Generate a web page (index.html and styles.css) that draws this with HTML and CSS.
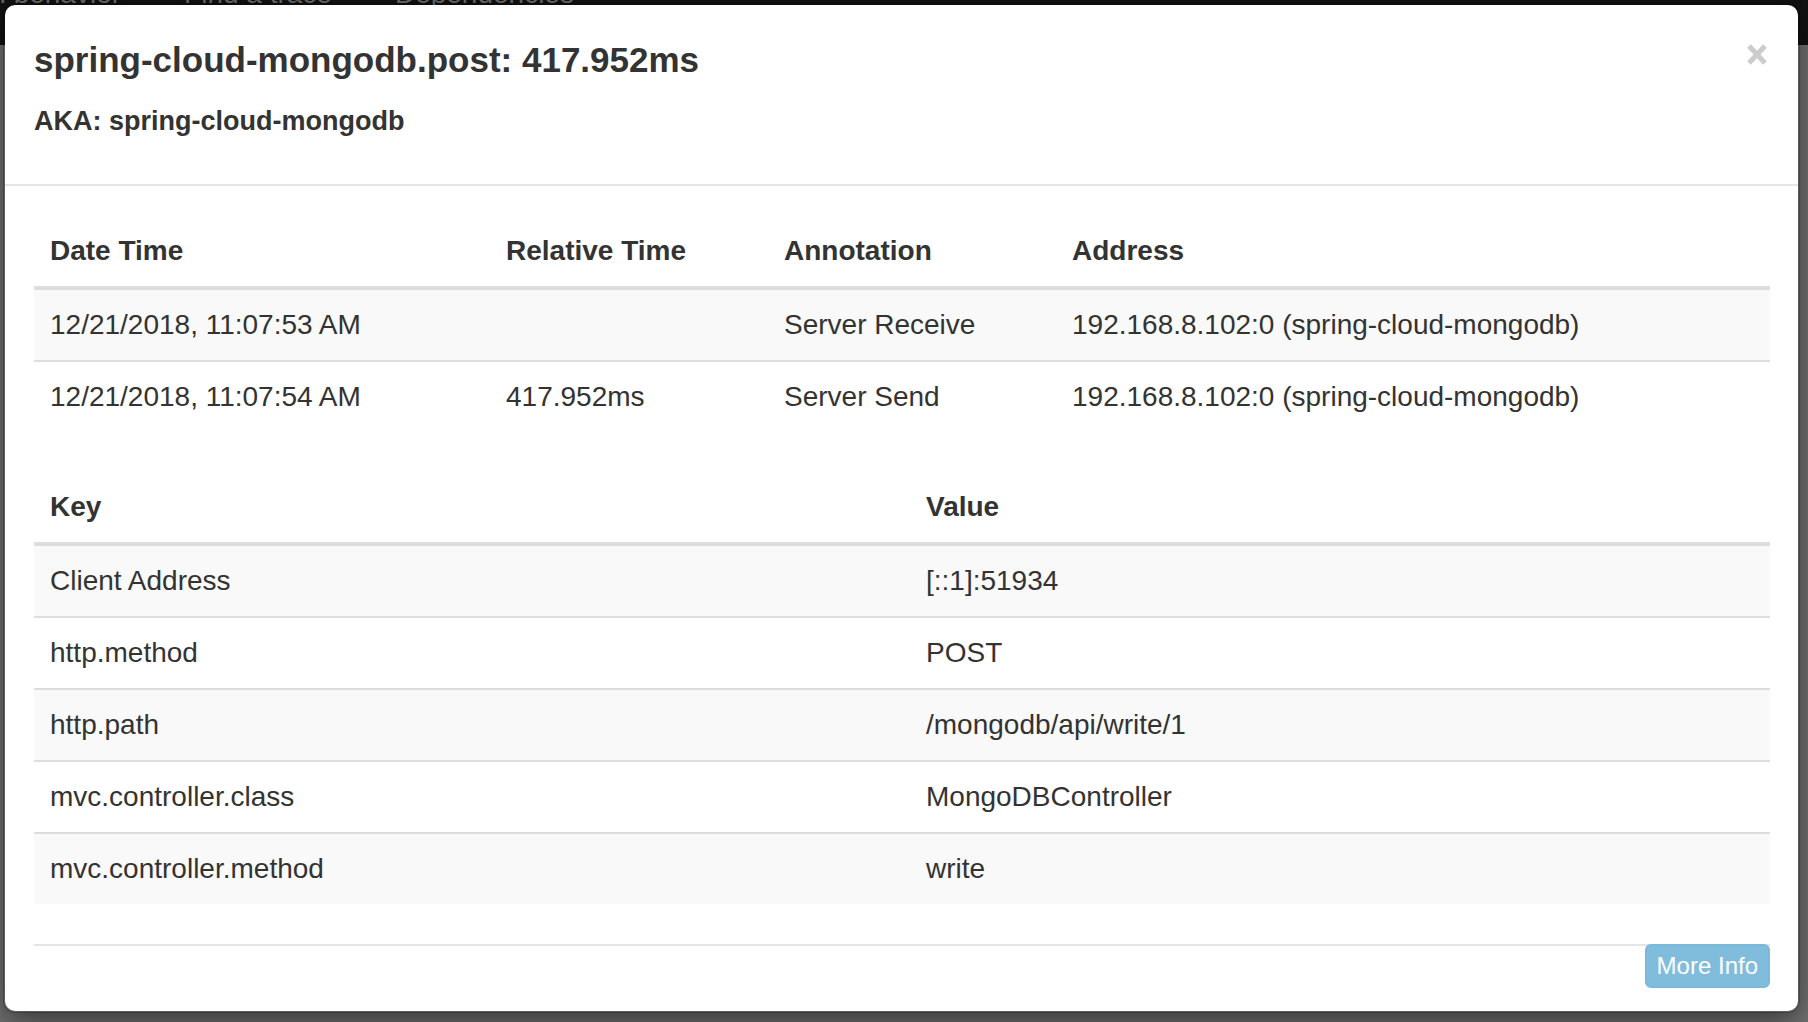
FILE: index.html
```html
<!DOCTYPE html>
<html>
<head>
<meta charset="utf-8">
<title>Span details</title>
<link rel="stylesheet" href="styles.css">
</head>
<body>
<div class="page">
  <div class="navbar">
    <div class="nav-links">
      <span class="nav-item">Investigate system behavior</span>
      <span class="nav-item">Find a trace</span>
      <span class="nav-item">Dependencies</span>
    </div>
  </div>
  <div class="backdrop"></div>
</div>

<div class="modal">
  <div class="modal-header">
    <div class="titles">
      <h4 class="modal-title">spring-cloud-mongodb.post: 417.952ms</h4>
      <h5 class="aka">AKA: spring-cloud-mongodb</h5>
    </div>
    <button class="close" aria-label="Close">
      <svg width="20" height="21" viewBox="0 0 20 21"><path d="M2 2 L18 19 M18 2 L2 19" stroke="#cccccc" stroke-width="5" fill="none"/></svg>
    </button>
  </div>
  <div class="modal-body">
    <table class="table annotations">
      <thead>
        <tr>
          <th class="c-date">Date Time</th>
          <th class="c-rel">Relative Time</th>
          <th class="c-ann">Annotation</th>
          <th class="c-addr">Address</th>
        </tr>
      </thead>
      <tbody>
        <tr>
          <td>12/21/2018, 11:07:53 AM</td>
          <td></td>
          <td>Server Receive</td>
          <td>192.168.8.102:0 (spring-cloud-mongodb)</td>
        </tr>
        <tr>
          <td>12/21/2018, 11:07:54 AM</td>
          <td>417.952ms</td>
          <td>Server Send</td>
          <td>192.168.8.102:0 (spring-cloud-mongodb)</td>
        </tr>
      </tbody>
    </table>

    <table class="table tags">
      <thead>
        <tr>
          <th class="c-key">Key</th>
          <th class="c-val">Value</th>
        </tr>
      </thead>
      <tbody>
        <tr><td>Client Address</td><td>[::1]:51934</td></tr>
        <tr><td>http.method</td><td>POST</td></tr>
        <tr><td>http.path</td><td>/mongodb/api/write/1</td></tr>
        <tr><td>mvc.controller.class</td><td>MongoDBController</td></tr>
        <tr><td>mvc.controller.method</td><td>write</td></tr>
      </tbody>
    </table>

    <div class="modal-footer">
      <button class="btn-more">More Info</button>
    </div>
  </div>
</div>
</body>
</html>
```

FILE: styles.css
```css
html, body {
  margin: 0;
  padding: 0;
}
body {
  width: 1808px;
  height: 1022px;
  overflow: hidden;
  font-family: "Liberation Sans", Arial, Helvetica, sans-serif;
  color: #333333;
  background: #747474;
  position: relative;
}

.page {
  height: 1022px;
  display: flex;
  flex-direction: column;
}
.navbar {
  height: 45px;
  background: #121212;
  overflow: hidden;
}
.nav-links {
  display: flex;
  gap: 63px;
  margin-top: -20px;
  margin-left: -226px;
  font-size: 28px;
  line-height: 28px;
  color: #6c6c6c;
  white-space: nowrap;
}
.backdrop {
  flex: 1;
  background: #747474;
}

.modal {
  position: absolute;
  top: 3px;
  left: 3px;
  width: 1797px;
  box-sizing: border-box;
  background: #ffffff;
  border: 2px solid rgba(0, 0, 0, 0.2);
  border-radius: 12px;
  box-shadow: 0 10px 30px rgba(0, 0, 0, 0.5);
  background-clip: padding-box;
}

.modal-header {
  display: flex;
  justify-content: space-between;
  align-items: flex-start;
  padding: 30px 28px 44px 29px;
  border-bottom: 2px solid #e5e5e5;
}
.modal-title {
  margin: 0;
  font-size: 35px;
  line-height: 50px;
  font-weight: bold;
  color: #333333;
}
.aka {
  margin: 17px 0 0 0;
  font-size: 27px;
  line-height: 38px;
  font-weight: bold;
  color: #333333;
}
.close {
  margin: 9px 3px 0 0;
  padding: 0;
  border: 0;
  background: transparent;
  width: 20px;
  height: 21px;
  display: block;
}
.close svg {
  display: block;
}

.modal-body {
  padding: 30px 28px 0 29px;
}

.table {
  width: 100%;
  border-collapse: collapse;
  border-spacing: 0;
  table-layout: fixed;
  margin-bottom: 40px;
  font-size: 28px;
}
.table th {
  text-align: left;
  font-weight: bold;
  padding: 15px 16px;
  line-height: 40px;
  border-bottom: 4px solid #dddddd;
  vertical-align: bottom;
}
.table td {
  padding: 15px 16px;
  line-height: 40px;
  border-top: 2px solid #dddddd;
  vertical-align: top;
  white-space: nowrap;
}
.table tbody tr:first-child td {
  border-top: 0;
}
.table tbody tr:nth-child(odd) {
  background: #f9f9f9;
}

.c-date { width: 424px; }
.c-rel { width: 246px; }
.c-ann { width: 256px; }
.c-key { width: 844px; }

.modal-footer {
  display: flex;
  justify-content: flex-end;
  border-top: 2px solid #e5e5e5;
  padding-bottom: 23px;
}
.btn-more {
  margin-top: -2px;
  font-family: "Liberation Sans", Arial, Helvetica, sans-serif;
  font-size: 24px;
  line-height: 36px;
  padding: 2px 10px;
  border: 2px solid #7ab9dc;
  border-radius: 6px;
  background: #80bddd;
  color: #ffffff;
}
```
